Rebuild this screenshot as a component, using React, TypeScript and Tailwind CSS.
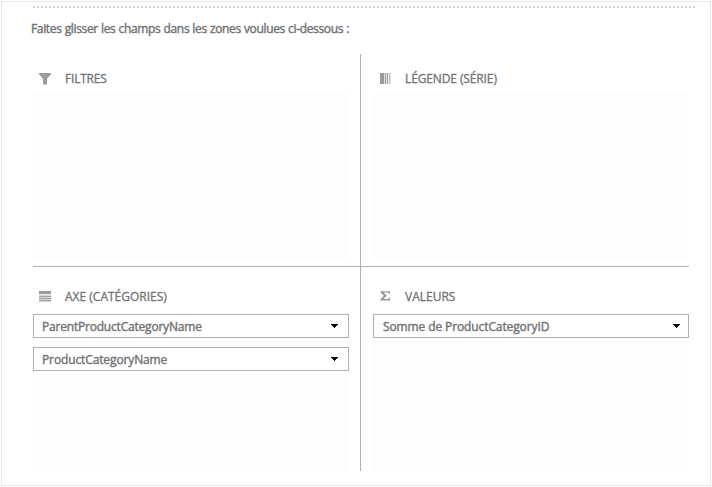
import type { ReactNode } from "react";

function FunnelIcon() {
  return (
    <svg width="12" height="12" viewBox="0 0 12 12" className="block" fill="#9b9b9b">
      <path d="M0 0H12V1.2L8 5.8V11.5H4V5.8L0 1.2Z" />
    </svg>
  );
}

function SeriesIcon() {
  return (
    <svg width="12" height="12" viewBox="0 0 12 12" className="ml-px block" shapeRendering="crispEdges">
      <path d="M0 0H4V11H0Z" fill="#9b9b9b" />
      <path d="M4 0H11V11H4Z" fill="#dedede" />
      <path d="M5 0H6V11H5ZM7 0H8V11H7Z" fill="#a4a4a4" />
      <path d="M9 0H10V11H9Z" fill="#c4c4c4" />
      <path d="M8 0H9V11H8Z" fill="#f0f0f0" />
    </svg>
  );
}

function AxisIcon() {
  return (
    <svg width="12" height="12" viewBox="0 0 12 12" className="block" shapeRendering="crispEdges">
      <path d="M0 0H12V11H0Z" fill="#d4d4d4" />
      <path d="M0 0H12V3H0Z" fill="#9b9b9b" />
      <path d="M0 3H12V4H0Z" fill="#ededed" />
      <path d="M0 5H12V6H0ZM0 7H12V8H0ZM0 9H12V10H0Z" fill="#a6a6a6" />
    </svg>
  );
}

function SigmaIcon() {
  return (
    <svg width="12" height="12" viewBox="0 0 12 12" className="ml-px block" fill="#999">
      <path d="M0.3 0.2H10V3H9L8.4 1.6H3.6L6.9 4.8L3.4 8H8.4L9 6.6H10V9.4H0.3V8.3L3.9 4.8L0.3 1.3Z" />
    </svg>
  );
}

interface FieldProps {
  label: string;
  textClass: string;
  className?: string;
}

function Field({ label, textClass, className = "pr-2.5 pl-2" }: FieldProps) {
  return (
    <div className={`flex h-6 items-center justify-between border border-[#b0b0b0] bg-white ${className}`}>
      <span className={`pt-0.5 [-webkit-text-stroke:0.4px_#727272] ${textClass}`}>{label}</span>
      <svg width="7" height="4" viewBox="0 0 7 4" className="block" shapeRendering="crispEdges">
        <path d="M0 0H7V1H6V2H5V3H4V4H3V3H2V2H1V1H0Z" fill="#000" />
      </svg>
    </div>
  );
}

interface ZoneProps {
  title: ReactNode;
  icon: ReactNode;
  className?: string;
  headClass: string;
  children?: ReactNode;
}

function Zone({ title, icon, className = "", headClass, children }: ZoneProps) {
  return (
    <section className={`flex flex-col ${className}`}>
      <h2 className={`flex shrink-0 items-start pl-1.5 ${headClass}`}>
        <span className="w-[26px] pt-[5px]">{icon}</span>
        <span className="leading-[22px]">{title}</span>
      </h2>
      <div className="flex flex-1 flex-col gap-[9px] bg-[#fdfdfd]">{children}</div>
    </section>
  );
}

export default function App() {
  return (
    <div className="h-[487px] w-[712px] bg-white p-px font-['Open_Sans','Noto_Sans',sans-serif] text-[12px] text-[#727272] [-webkit-text-stroke:0.3px_#727272]">
      <div className="h-[485px] w-[710px] border border-[#e8e8e8] pt-1 pl-[31px]">
        <div className="h-0.5 w-[662px] bg-[repeating-linear-gradient(90deg,#d4d4d4_0_2px,transparent_2px_4px)]" />
        <p className="-ml-0.5 h-[46px] pt-3 leading-[18px] tracking-[-0.34px] [word-spacing:0.3px] [-webkit-text-stroke:0.4px_#727272]">
          Faites glisser les champs dans les zones voulues ci-dessous :
        </p>
        <div className="grid h-[417px] w-[656px] grid-cols-[327px_329px] grid-rows-[213px_204px]">
          <Zone
            title={<span className="tracking-[-0.2px]">FILTRES</span>}
            icon={<FunnelIcon />}
            headClass="h-[25px]"
            className="border-b border-[#b0b0b0] pt-3.5 pr-[11px] pb-[7px]"
          />
          <Zone
            title={<span className="tracking-[-0.12px]">LÉGENDE (SÉRIE)</span>}
            icon={<SeriesIcon />}
            headClass="h-[25px]"
            className="border-b border-l border-[#b0b0b0] pt-3.5 pb-[7px] pl-3"
          />
          <Zone
            title={<span>AXE (CATÉGORIES)</span>}
            icon={<AxisIcon />}
            headClass="h-7"
            className="pt-[19px] pr-[11px]"
          >
            <Field label="ParentProductCategoryName" textClass="tracking-[-0.2px]" />
            <Field label="ProductCategoryName" textClass="tracking-[-0.12px]" />
          </Zone>
          <Zone
            title={<span>VALEURS</span>}
            icon={<SigmaIcon />}
            headClass="h-7"
            className="border-l border-[#b0b0b0] pt-[19px] pl-3"
          >
            <Field label="Somme de ProductCategoryID" textClass="tracking-[-0.11px]" className="pr-2 pl-[9px]" />
          </Zone>
        </div>
      </div>
    </div>
  );
}
